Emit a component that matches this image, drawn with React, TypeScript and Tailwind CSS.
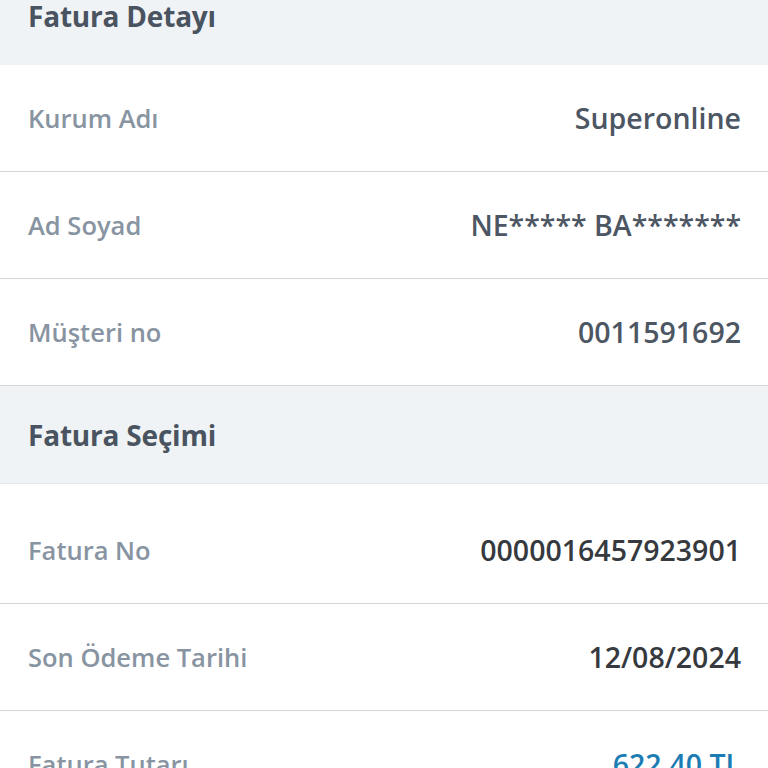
const font = { fontFamily: '"Open Sans", "Noto Sans", sans-serif' };

type Row = { label: string; value: string; tone?: "slate" | "dark" | "blue" };

function SectionHeader({ title, className = "" }: { title: string; className?: string }) {
  return (
    <div className={`h-[98px] bg-[#f0f3f5] flex items-center px-[28px] ${className}`}>
      <h2 className="text-[28px] font-bold text-[#4a5461] tracking-[-0.2px]">{title}</h2>
    </div>
  );
}

function InfoRow({ label, value, tone = "slate", extraTop = false, last = false }: Row & { extraTop?: boolean; last?: boolean }) {
  const valueColor =
    tone === "blue" ? "text-[#1b7db3] font-semibold" : tone === "dark" ? "text-[#363a3f]" : "text-[#4d5663]";
  return (
    <div
      className={`flex items-center justify-between pl-[28px] pr-[27px] bg-white ${
        extraTop ? "h-[120px] pt-[13px]" : "h-[107px]"
      } ${last ? "" : "border-b border-[#d5d7d9]"}`}
    >
      <span className="text-[25.5px] font-semibold text-[#8894a1]">{label}</span>
      <span className={`text-[28.5px] font-[550] ${valueColor}`}>{value}</span>
    </div>
  );
}

export default function App() {
  return (
    <div className="w-[768px] h-[768px] overflow-hidden bg-white" style={font}>
      <SectionHeader title="Fatura Detayı" className="-mt-[33px]" />
      <InfoRow label="Kurum Adı" value="Superonline" />
      <InfoRow label="Ad Soyad" value="NE***** BA*******" />
      <InfoRow label="Müşteri no" value="0011591692" />
      <SectionHeader title="Fatura Seçimi" className="border-b border-[#e6e9eb]" />
      <InfoRow label="Fatura No" value="0000016457923901" tone="dark" extraTop />
      <InfoRow label="Son Ödeme Tarihi" value="12/08/2024" tone="dark" />
      <InfoRow label="Fatura Tutarı" value="622,40 TL" tone="blue" last />
    </div>
  );
}
